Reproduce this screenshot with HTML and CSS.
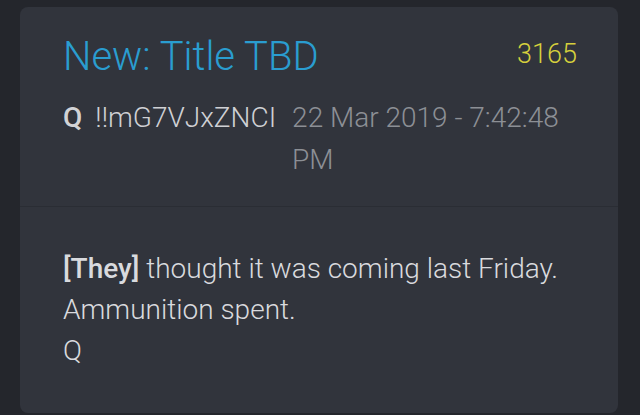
FILE: index.html
```html
<!DOCTYPE html>
<html lang="en">
<head>
  <meta charset="UTF-8">
  <title>Q Drop 3165</title>
  <link rel="stylesheet" href="styles.css">
</head>
<body>

<div class="post">
  <div class="post-header">
    <div class="title-row">
      <div class="title">New: Title TBD</div>
      <div class="post-num">3165</div>
    </div>
    <div class="meta">
      <span class="author">Q</span>
      <span class="trip">!!mG7VJxZNCI</span>
      <span class="date">22 Mar 2019 - 7:42:48 PM</span>
    </div>
  </div>
  <div class="post-body">
    <p><strong>[They]</strong> thought it was coming last Friday.<br>
    Ammunition spent.<br>
    Q</p>
  </div>
</div>

</body>
</html>
```

FILE: styles.css
```css
body {
  margin: 0;
  padding: 7px 22px 2px 20px;
  background-color: #24262c;
  font-family: Roboto, 'Noto Sans', sans-serif;
  font-weight: 300;
}

.post {
  background-color: #31343c;
  border-radius: 8px;
  height: 406px;
  box-sizing: border-box;
}

.post-header {
  padding: 26px 41px 0 43px;
  height: 200px;
  box-sizing: border-box;
  border-bottom: 1px solid #2a2d34;
}

.title-row {
  display: flex;
  justify-content: space-between;
  align-items: flex-start;
}

.title {
  color: #2a9dd0;
  font-size: 40px;
  line-height: 48px;
}

.post-num {
  color: #d6d03c;
  font-size: 27px;
  line-height: 42px;
}

.meta {
  display: flex;
  align-items: flex-start;
  gap: 13px;
  margin-top: 16px;
  font-size: 28px;
  line-height: 42px;
}

.author {
  color: #d2d3d6;
  font-weight: 500;
}

.trip {
  color: #cfd0d4;
}

.date {
  color: #8c8f95;
  flex: 1;
  margin-left: 3px;
}

.post-body {
  padding: 41px 22px 0 43px;
  color: #d9dade;
  font-size: 28px;
  line-height: 41px;
}

.post-body p {
  margin: 0;
}

.post-body strong {
  font-weight: 500;
}
```
